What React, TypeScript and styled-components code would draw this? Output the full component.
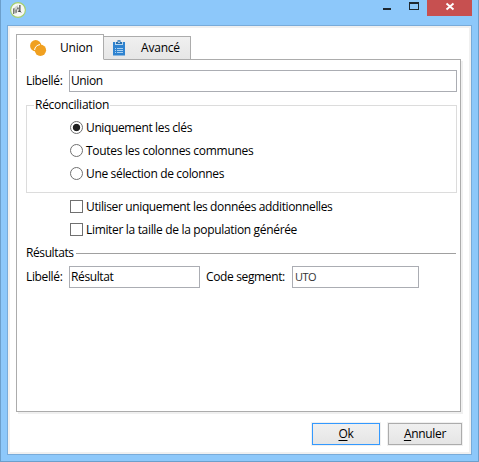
import React from "react";
import styled, { createGlobalStyle } from "styled-components";

const GlobalStyle = createGlobalStyle`
  * { box-sizing: border-box; }
  body {
    margin: 0;
    overflow: hidden;
    color: #000;
    font: 12px/16px "Segoe UI", "Open Sans", "Noto Sans", sans-serif;
  }
`;

const Window = styled.div`
  width: 479px;
  height: 462px;
  display: flex;
  flex-direction: column;
  padding: 0 6px 6px;
  background: #8dc8fa;
  border: solid #6c9fcb;
  border-width: 0 1px 1px;
`;

const TitleBar = styled.header`
  height: 25px;
  flex: none;
  display: flex;
  align-items: flex-start;
  padding-left: 2px;
`;

const AppIcon = styled.svg`
  width: 18px;
  height: 18px;
  margin: 1px auto 0 0;
`;

const WindowButtons = styled.div`
  display: flex;
  height: 16px;
`;

const WindowButton = styled.button<{ $width: number; $close?: boolean }>`
  width: ${(p) => p.$width}px;
  height: 16px;
  padding: 0;
  border: 0;
  background: ${(p) => (p.$close ? "#c75050" : "transparent")};

  svg { display: block; }
`;

const Client = styled.main`
  flex: 1;
  display: flex;
  flex-direction: column;
  padding: 6px 6px 0;
  background: #fff;
  border: 1px solid #78abd9;
  box-shadow: inset 0 0 0 2px #f0f0f0;
`;

const Tabs = styled.nav`
  display: flex;
  align-items: flex-end;
  height: 26px;
  margin: 2px 0 -1px 2px;
`;

const Tab = styled.button<{ $active?: boolean }>`
  display: flex;
  align-items: center;
  width: ${(p) => (p.$active ? 88 : 87)}px;
  height: ${(p) => (p.$active ? 26 : 24)}px;
  padding: ${(p) => (p.$active ? "2px 0 0 13px" : "0 0 0 9px")};
  gap: ${(p) => (p.$active ? 13 : 14)}px;
  font: inherit;
  color: inherit;
  border: 1px solid #acacac;
  border-bottom-color: ${(p) => (p.$active ? "#fff" : "#acacac")};
  border-left-width: ${(p) => (p.$active ? 1 : 0)}px;
  background: ${(p) => (p.$active ? "#fff" : "linear-gradient(#f0f0f0, #e6e6e6)")};
  z-index: 1;

  svg { flex: none; }
`;

const Panel = styled.section`
  width: 445px;
  height: 353px;
  margin-left: 2px;
  padding: 10px 3px 0 9px;
  border: 1px solid #acacac;
  box-shadow: 2px 2px 0 #f0f0f0;
`;

const Text = styled.span<{ $spacing?: number }>`
  white-space: nowrap;
  letter-spacing: ${(p) => p.$spacing ?? -0.37}px;
`;

const FieldRow = styled.div`
  display: flex;
  align-items: center;
  height: 22px;
`;

const FieldLabel = styled.label<{ $width: number; $indent?: number }>`
  width: ${(p) => p.$width}px;
  margin: 0 0 0 ${(p) => p.$indent ?? 0}px;
  white-space: nowrap;
  letter-spacing: -0.36px;
`;

const Input = styled.input<{ $width: number; $small?: boolean }>`
  width: ${(p) => p.$width}px;
  height: 22px;
  padding: 0 2px 2px ${(p) => (p.$small ? 2 : 1)}px;
  border: 1px solid #abadb3;
  outline: none;
  background: #fff;
  color: ${(p) => (p.$small ? "#333" : "#000")};
  font: inherit;
  font-size: ${(p) => (p.$small ? 11 : 12)}px;
  letter-spacing: ${(p) => (p.$small ? -0.5 : -0.38)}px;
`;

const Group = styled.fieldset`
  width: 431px;
  height: 96px;
  margin: 5px 0 0;
  padding: 3px 0 0 43px;
  min-width: 0;
  border: 1px solid #dcdcdc;
`;

const Legend = styled.legend`
  height: 16px;
  margin-left: -36px;
  padding: 0 1px 0 1px;
`;

const Option = styled.label`
  display: flex;
  align-items: center;
  gap: 3px;
  height: 23px;
`;

const Radio = styled.input.attrs({ type: "radio" })`
  appearance: none;
  flex: none;
  width: 13px;
  height: 13px;
  margin: 0;
  border: 1px solid #707070;
  border-radius: 50%;
  background: #fff;

  &:checked {
    background: radial-gradient(circle, #212121 3.3px, #fff 4.1px);
  }
`;

const Checkbox = styled.input.attrs({ type: "checkbox" })`
  appearance: none;
  flex: none;
  width: 13px;
  height: 13px;
  margin: 0;
  border: 1px solid #707070;
  background: #fff;
`;

const Checks = styled.div`
  padding: 2px 0 0 44px;
`;

const Section = styled.div`
  display: flex;
  align-items: center;
  gap: 2px;
  width: 430px;
  height: 16px;
  margin: 4px 0 5px;
`;

const Rule = styled.div`
  flex: 1;
  height: 1px;
  margin-top: 1px;
  background: #a0a0a0;
`;

const Footer = styled.footer`
  display: flex;
  justify-content: flex-end;
  gap: 8px;
  padding: 11px 3px 0 0;
`;

const Button = styled.button<{ $primary?: boolean }>`
  width: ${(p) => (p.$primary ? 68 : 74)}px;
  height: 22px;
  padding: 0 0 1px;
  font: inherit;
  letter-spacing: -0.3px;
  color: inherit;
  border: 1px solid ${(p) => (p.$primary ? "#3399ff" : "#acacac")};
  background: linear-gradient(#f0f0f0, #e5e5e5);
  box-shadow: 0 0 0 1px #f0f0f0;
`;

const Mnemonic = styled.span`
  text-decoration: underline;
  text-underline-offset: 2px;
  text-decoration-thickness: 1px;
  text-decoration-skip-ink: none;
`;

const UnionIcon = () => (
  <svg width="17" height="17" viewBox="0 0 17 17">
    <circle cx="5.7" cy="5.7" r="5.6" fill="#f0a020" />
    <circle cx="10.4" cy="10.3" r="5.7" fill="#f0a020" />
    <path d="M4.6 10C4.8 7.1 7 4.9 10 4.6" fill="none" stroke="#fff" strokeWidth="1" />
  </svg>
);

const ClipboardIcon = () => (
  <svg width="14" height="16" viewBox="0 0 14 16">
    <path d="M0 2h12v13.5H0z" fill="#2f83d0" />
    <path d="M2 2h8v3H2z" fill="#b9d7ef" />
    <path d="M3 4V2h1.5V.3h3V2H9v2z" fill="#276eae" />
    <path d="M5.3 1.6h1.4V3H5.3z" fill="#e8f2fb" />
    <path d="M2 8.5h1M4 8.5h6M2 10.5h1M4 10.5h6M2 12.5h1M4 12.5h6" stroke="#a9d0f1" />
  </svg>
);

export default function App() {
  return (
    <>
      <GlobalStyle />
      <Window>
        <TitleBar>
          <AppIcon viewBox="0 0 18 18">
            <circle cx="9" cy="9" r="7.4" fill="#f7f8f5" stroke="#a5cf70" strokeWidth="1.2" />
            <path d="M4 8l4-3v7l-4 1z" fill="#a9ada9" />
            <path d="M6 6l3-2v4l-3 1z" fill="#d2d5d1" />
            <path d="M4.5 7.5V13M7.2 8.5v3" stroke="#777" fill="none" />
            <path d="M10.9 4v6.5M8.8 10.2h2.2l1 1.2M9 6.5v2" stroke="#222" fill="none" />
          </AppIcon>
          <WindowButtons>
            <WindowButton $width={27} aria-label="Minimize">
              <svg width="27" height="16"><path d="M5 8h8v2H5z" fill="#1e2830" /></svg>
            </WindowButton>
            <WindowButton $width={22} aria-label="Maximize">
              <svg width="22" height="16">
                <path fillRule="evenodd" d="M4 2h10v8H4zM5 4v5h8V4z" fill="#1e2830" />
              </svg>
            </WindowButton>
            <WindowButton $width={45} $close aria-label="Close">
              <svg width="45" height="16">
                <path d="M19.5 3.5l7 6M26.5 3.5l-7 6" stroke="#fff" strokeWidth="1.9" />
              </svg>
            </WindowButton>
          </WindowButtons>
        </TitleBar>
        <Client>
          <Tabs>
            <Tab $active><UnionIcon /><Text $spacing={-0.2}>Union</Text></Tab>
            <Tab><ClipboardIcon /><Text $spacing={-0.2}>Avancé</Text></Tab>
          </Tabs>
          <Panel>
            <FieldRow>
              <FieldLabel $width={43}>Libellé:</FieldLabel>
              <Input $width={388} defaultValue="Union" />
            </FieldRow>
            <Group>
              <Legend><Text $spacing={-0.27}>Réconciliation</Text></Legend>
              <Option><Radio name="keys" defaultChecked /><Text>Uniquement les clés</Text></Option>
              <Option><Radio name="keys" /><Text $spacing={-0.29}>Toutes les colonnes communes</Text></Option>
              <Option><Radio name="keys" /><Text $spacing={-0.34}>Une sélection de colonnes</Text></Option>
            </Group>
            <Checks>
              <Option><Checkbox /><Text>Utiliser uniquement les données additionnelles</Text></Option>
              <Option><Checkbox /><Text $spacing={-0.33}>Limiter la taille de la population générée</Text></Option>
            </Checks>
            <Section><Text $spacing={-0.4}>Résultats</Text><Rule /></Section>
            <FieldRow>
              <FieldLabel $width={43}>Libellé:</FieldLabel>
              <Input $width={131} defaultValue="Résultat" />
              <FieldLabel $width={86} $indent={6}>Code segment:</FieldLabel>
              <Input $width={127} $small defaultValue="UTO" />
            </FieldRow>
          </Panel>
          <Footer>
            <Button $primary><Mnemonic>O</Mnemonic>k</Button>
            <Button><Mnemonic>A</Mnemonic>nnuler</Button>
          </Footer>
        </Client>
      </Window>
    </>
  );
}
